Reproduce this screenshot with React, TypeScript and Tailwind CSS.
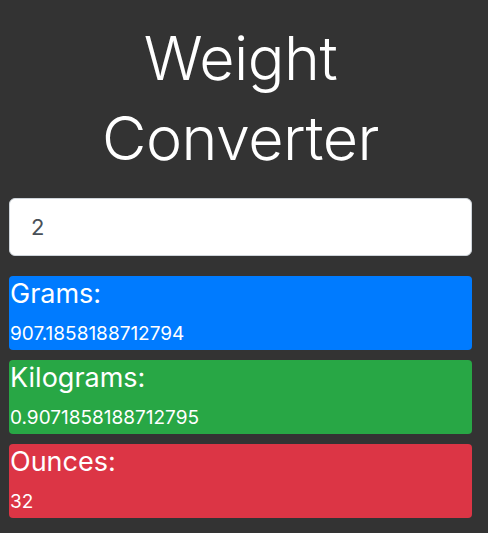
import { useState } from "react";

const units = [
  { key: "g", label: "Grams:", convert: (lb: number) => lb / 0.00220462, bg: "bg-[#007bff]" },
  { key: "kg", label: "Kilograms:", convert: (lb: number) => lb / 2.20462, bg: "bg-[#28a745]" },
  { key: "oz", label: "Ounces:", convert: (lb: number) => lb * 16, bg: "bg-[#dc3545]" },
];

export default function App() {
  const [pounds, setPounds] = useState("2");
  const lbs = parseFloat(pounds) || 0;

  return (
    <div className="min-h-[533px] bg-[#333333] pl-[9px] pr-[16px] pt-[18px] font-['Inter',sans-serif] text-white">
      <h1 className="text-center text-[61px] font-light leading-[80px] tracking-[-0.5px]">
        Weight
        <br />
        Converter
      </h1>

      <input
        type="text"
        value={pounds}
        onChange={(e) => setPounds(e.target.value)}
        className="mt-[20px] block h-[58px] w-full rounded-[6px] border border-[#ced4da] bg-white px-[21px] text-[22px] text-[#495057] outline-none"
      />

      <div className="mt-[20px] flex flex-col gap-[10px]">
        {units.map((u) => (
          <div key={u.key} className={`h-[74px] rounded-[4px] pl-[1px] ${u.bg}`}>
            <p className="pt-[1px] text-[27px] leading-[34px]">{u.label}</p>
            <p className="mt-[11px] text-[19px] leading-[24px]">{u.convert(lbs)}</p>
          </div>
        ))}
      </div>
    </div>
  );
}
